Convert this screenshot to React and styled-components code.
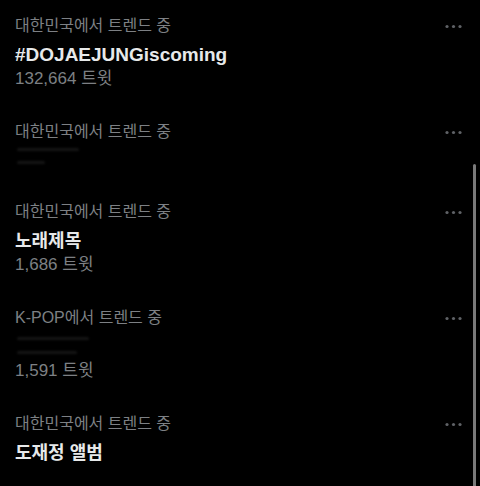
import React from 'react'
import styled, { createGlobalStyle } from 'styled-components'

const GlobalStyle = createGlobalStyle`
  html, body {
    margin: 0;
    padding: 0;
    background: #000;
  }
  body {
    font-family: "Liberation Sans", "Noto Sans CJK KR", sans-serif;
    -webkit-font-smoothing: antialiased;
  }
`

const Page = styled.div`
  position: relative;
  width: 480px;
  height: 486px;
  overflow: hidden;
  background: #000;
`

const TrendItem = styled.div`
  display: flex;
  flex-direction: column;
  padding: 16px 18px 16px 15px;
`

const TrendHeader = styled.div`
  display: flex;
  align-items: center;
  justify-content: space-between;
  height: 20px;
`

const Context = styled.span`
  font-size: 16px;
  line-height: 20px;
  color: #7d8084;
`

const Title = styled.div`
  margin-top: 6px;
  font-size: ${({ korean }) => (korean ? '18px' : '19px')};
  line-height: 26px;
  font-weight: 700;
  color: #e7e9ea;
`

const Count = styled.div`
  font-size: 17px;
  line-height: 22px;
  color: #7d8084;
`

const Redacted = styled.div`
  height: ${({ tall }) => (tall ? '32px' : '28px')};
  filter: blur(1px);
`

const Smudge = styled.span`
  display: block;
  height: 3px;
  margin-top: ${({ gap }) => gap}px;
  width: ${({ w }) => w}px;
  margin-left: 2px;
  background: #151515;
  border-radius: 2px;
`

const MoreButton = styled.button`
  display: flex;
  align-items: center;
  padding: 0;
  border: none;
  background: none;
  color: #5f6266;
`

const ScrollThumb = styled.div`
  position: absolute;
  right: 4px;
  top: 164px;
  bottom: -10px;
  width: 3px;
  border-radius: 2px;
  background: #7a7a7a;
`

const MoreIcon = () => (
  <svg width="17" height="5" viewBox="0 0 17 5" fill="currentColor">
    <circle cx="2" cy="2.5" r="1.6" />
    <circle cx="8.5" cy="2.5" r="1.6" />
    <circle cx="15" cy="2.5" r="1.6" />
  </svg>
)

const trends = [
  { context: '대한민국에서 트렌드 중', title: '#DOJAEJUNGiscoming', count: '132,664 트윗' },
  { context: '대한민국에서 트렌드 중', hidden: 'short' },
  { context: '대한민국에서 트렌드 중', title: '노래제목', korean: true, count: '1,686 트윗' },
  { context: 'K-POP에서 트렌드 중', hidden: 'tall', count: '1,591 트윗' },
  { context: '대한민국에서 트렌드 중', title: '도재정 앨범', korean: true },
]

const Trend = ({ trend }) => (
  <TrendItem>
    <TrendHeader>
      <Context>{trend.context}</Context>
      <MoreButton aria-label="더 보기">
        <MoreIcon />
      </MoreButton>
    </TrendHeader>
    {trend.title && <Title korean={trend.korean}>{trend.title}</Title>}
    {trend.hidden === 'short' && (
      <Redacted>
        <Smudge gap={6} w={62} />
        <Smudge gap={10} w={28} />
      </Redacted>
    )}
    {trend.hidden === 'tall' && (
      <Redacted tall>
        <Smudge gap={9} w={72} />
        <Smudge gap={11} w={60} />
      </Redacted>
    )}
    {trend.count && <Count>{trend.count}</Count>}
  </TrendItem>
)

const App = () => (
  <Page>
    <GlobalStyle />
    {trends.map((t, i) => (
      <Trend key={i} trend={t} />
    ))}
    <ScrollThumb />
  </Page>
)

export default App
